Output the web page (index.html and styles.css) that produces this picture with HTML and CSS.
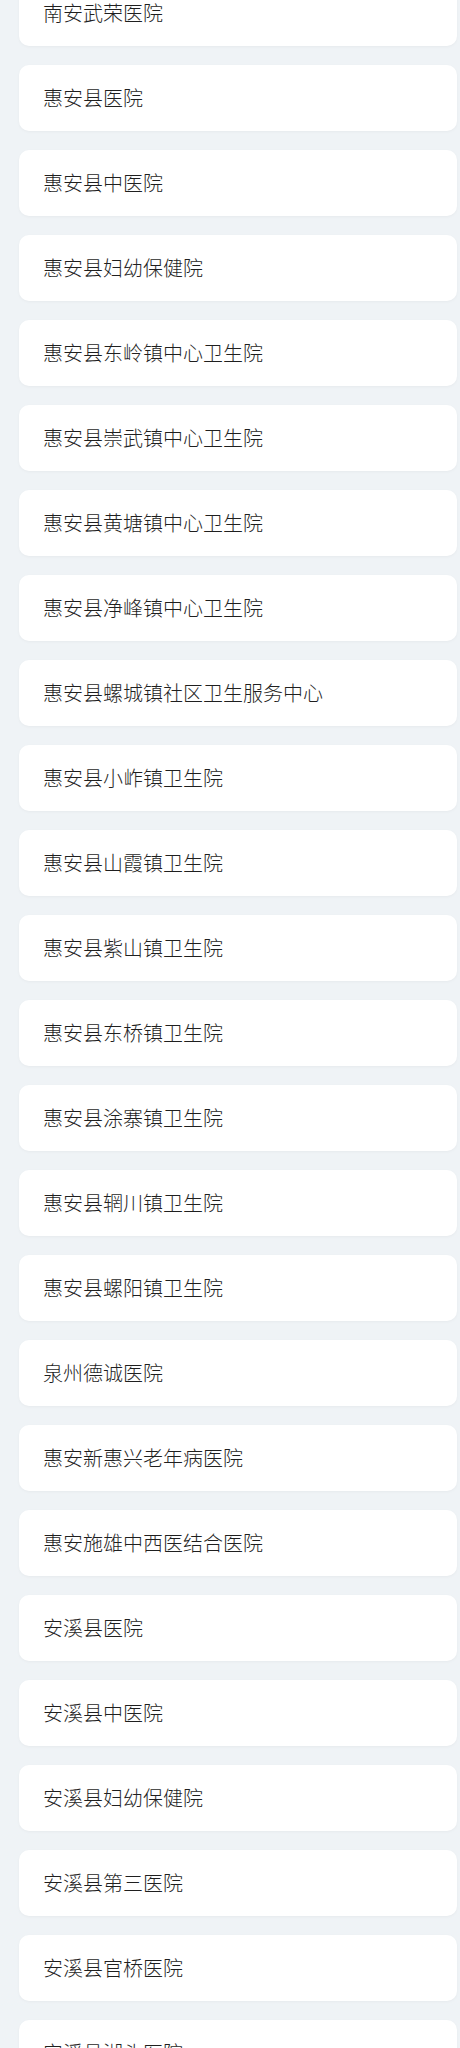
FILE: index.html
```html
<!DOCTYPE html>
<html lang="zh-CN">
<head>
<meta charset="utf-8">
<link rel="stylesheet" href="styles.css">
</head>
<body>
<ul class="list">
  <li class="item">南安武荣医院</li>
  <li class="item">惠安县医院</li>
  <li class="item">惠安县中医院</li>
  <li class="item">惠安县妇幼保健院</li>
  <li class="item">惠安县东岭镇中心卫生院</li>
  <li class="item">惠安县崇武镇中心卫生院</li>
  <li class="item">惠安县黄塘镇中心卫生院</li>
  <li class="item">惠安县净峰镇中心卫生院</li>
  <li class="item">惠安县螺城镇社区卫生服务中心</li>
  <li class="item">惠安县小岞镇卫生院</li>
  <li class="item">惠安县山霞镇卫生院</li>
  <li class="item">惠安县紫山镇卫生院</li>
  <li class="item">惠安县东桥镇卫生院</li>
  <li class="item">惠安县涂寨镇卫生院</li>
  <li class="item">惠安县辋川镇卫生院</li>
  <li class="item">惠安县螺阳镇卫生院</li>
  <li class="item">泉州德诚医院</li>
  <li class="item">惠安新惠兴老年病医院</li>
  <li class="item">惠安施雄中西医结合医院</li>
  <li class="item">安溪县医院</li>
  <li class="item">安溪县中医院</li>
  <li class="item">安溪县妇幼保健院</li>
  <li class="item">安溪县第三医院</li>
  <li class="item">安溪县官桥医院</li>
  <li class="item">安溪县湖头医院</li>
</ul>
</body>
</html>
```
FILE: styles.css
```css
html, body {
  margin: 0;
  padding: 0;
  background: #eff3f6;
}
body {
  font-family: "Noto Sans CJK SC", "Noto Sans", sans-serif;
  color: #1f1f1f;
  overflow: hidden;
}
.list {
  list-style: none;
  margin: -20px 3px 0 19px;
  padding: 0;
  display: flex;
  flex-direction: column;
  gap: 19px;
}
.item {
  height: 66px;
  box-sizing: border-box;
  padding: 0 24px;
  display: flex;
  align-items: center;
  background: #fff;
  border-radius: 10px;
  box-shadow: 0 1px 3px rgba(0, 0, 0, 0.04);
  font-size: 20px;
  font-weight: 300;
  line-height: 1;
}
```
